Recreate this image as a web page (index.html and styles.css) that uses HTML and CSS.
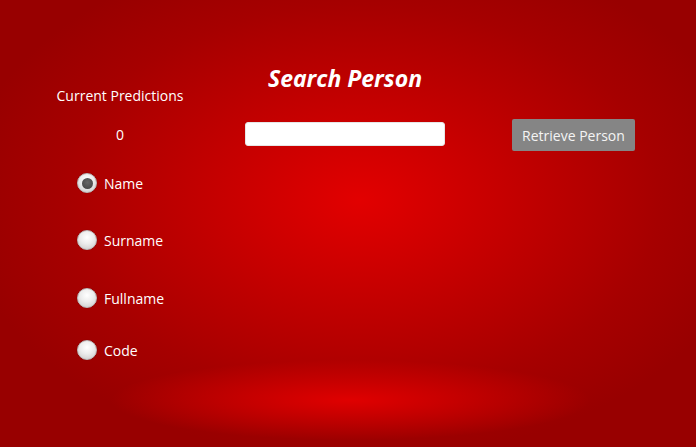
FILE: index.html
```html
<!DOCTYPE html>
<html>
<head>
<meta charset="utf-8">
<link rel="stylesheet" href="styles.css">
</head>
<body>
<div class="stage">
  <div class="top">
    <div class="pred-label">Current Predictions</div>
    <h1 class="title">Search Person</h1>
    <div class="pred-value">0</div>
    <input class="search" type="text">
    <button class="retrieve">Retrieve Person</button>
  </div>
  <div class="options">
    <label class="opt opt-name"><span class="radio checked"></span>Name</label>
    <label class="opt opt-surname"><span class="radio"></span>Surname</label>
    <label class="opt opt-full"><span class="radio"></span>Fullname</label>
    <label class="opt opt-code"><span class="radio"></span>Code</label>
  </div>
</div>
</body>
</html>
```
FILE: styles.css
```css
html, body {
  margin: 0;
  padding: 0;
  width: 696px;
  height: 447px;
  overflow: hidden;
}
body {
  font-family: "Open Sans", "Noto Sans", sans-serif;
  color: #fff;
}
.stage {
  width: 696px;
  height: 447px;
  box-sizing: border-box;
  padding: 64px 0 0 40px;
  background:
    radial-gradient(ellipse 240px 40px at 350px 400px, rgba(230,0,0,0.9), rgba(230,0,0,0) 100%),
    radial-gradient(ellipse 400px 260px at 360px 200px, #e20000 0%, #c20000 40%, #a60000 75%, #980000 100%);
}
.top {
  display: grid;
  grid-template-columns: 160px 200px 123px;
  grid-template-rows: 42px 58px;
  column-gap: 45px;
}
.top > .retrieve { margin-left: 22px; }
.pred-label {
  grid-column: 1;
  grid-row: 1;
  align-self: end;
  text-align: center;
  font-size: 14px;
  line-height: 18px;
  margin-bottom: 1px;
  white-space: nowrap;
}
.title {
  grid-column: 2;
  grid-row: 1;
  margin: 0;
  text-align: center;
  font-size: 23px;
  font-weight: 700;
  font-style: italic;
  line-height: 28px;
  white-space: nowrap;
}
.pred-value {
  grid-column: 1;
  grid-row: 2;
  text-align: center;
  font-size: 14px;
  line-height: 18px;
  margin-top: 20px;
}
.search {
  grid-column: 2;
  grid-row: 2;
  margin-top: 16px;
  height: 24px;
  width: 200px;
  box-sizing: border-box;
  border: 1px solid #e6e6e6;
  border-radius: 3px;
  background: #fff;
  padding: 0 4px;
}
.retrieve {
  grid-column: 3;
  grid-row: 2;
  margin-top: 13px;
  width: 123px;
  height: 32px;
  border: none;
  border-radius: 2px;
  background: #858585;
  color: #f4f4f4;
  font-family: inherit;
  font-size: 14px;
  padding: 0;
}
.options {
  display: flex;
  flex-direction: column;
  padding-left: 37px;
  margin-top: 9px;
}
.opt {
  display: flex;
  align-items: center;
  gap: 7px;
  height: 20px;
  font-size: 14px;
}
.opt-surname { margin-top: 37px; }
.opt-full { margin-top: 38px; }
.opt-code { margin-top: 32px; }
.radio {
  width: 20px;
  height: 20px;
  box-sizing: border-box;
  border-radius: 50%;
  border: 1px solid #bdbdbd;
  background: radial-gradient(circle at 50% 35%, #ffffff 0%, #ececec 45%, #c8c8c8 100%);
  box-shadow: 0 0 1px rgba(0,0,0,0.4);
  display: flex;
  align-items: center;
  justify-content: center;
}
.radio.checked::after {
  content: "";
  width: 11px;
  height: 11px;
  border-radius: 50%;
  background: radial-gradient(circle at 50% 40%, #666, #404040);
}
```
